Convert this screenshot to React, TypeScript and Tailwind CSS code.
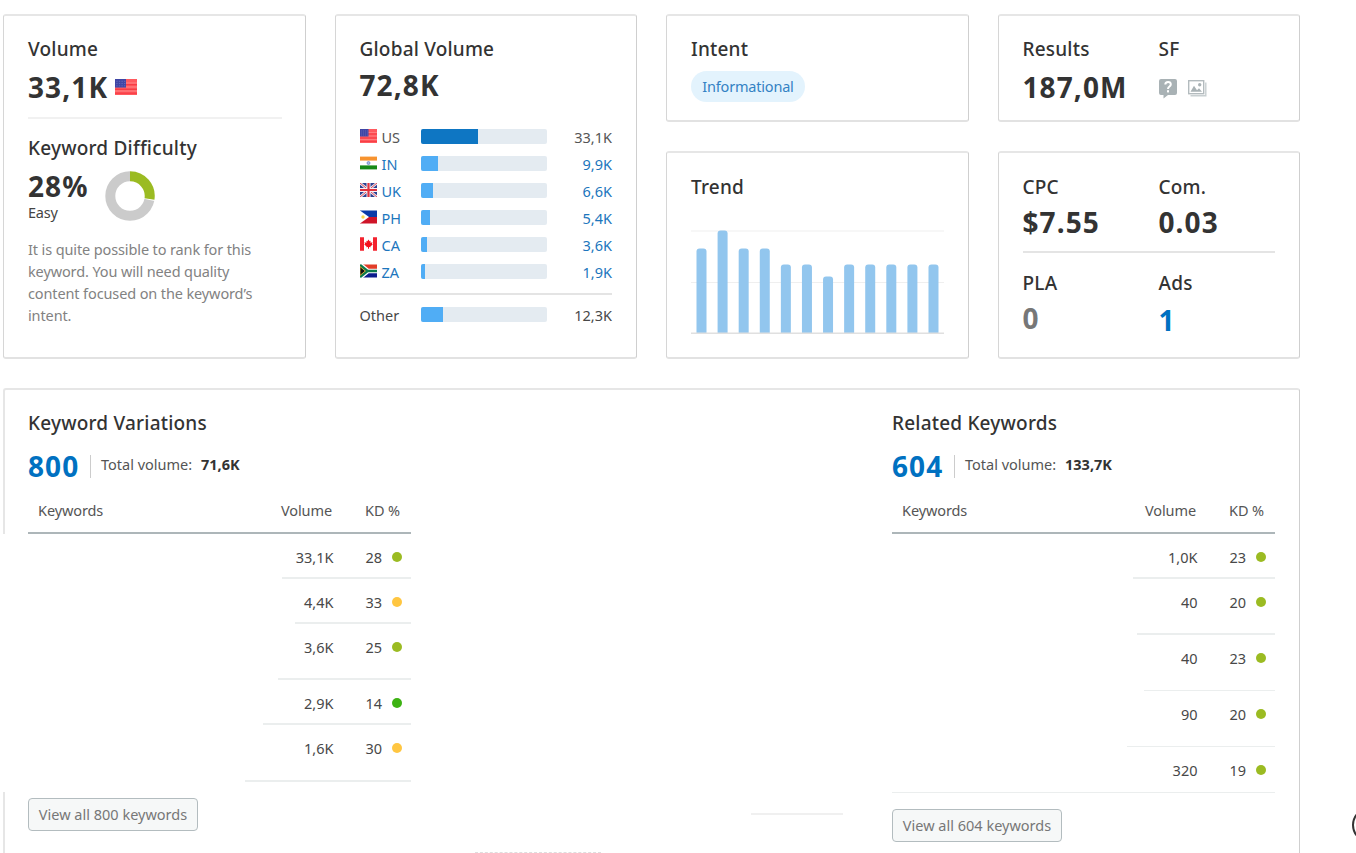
import clsx from "clsx"
import type { ReactNode } from "react"

type Country = "US" | "IN" | "UK" | "PH" | "CA" | "ZA"

const countries: { code: Country; volume: string; fill: number }[] = [
  { code: "US", volume: "33,1K", fill: 57 },
  { code: "IN", volume: "9,9K", fill: 17 },
  { code: "UK", volume: "6,6K", fill: 12 },
  { code: "PH", volume: "5,4K", fill: 9 },
  { code: "CA", volume: "3,6K", fill: 6 },
  { code: "ZA", volume: "1,9K", fill: 4 },
]

const trend = [85, 103, 85, 85, 69, 69, 57, 69, 69, 69, 69, 69]

type KeywordRow = {
  volume: string
  kd: number
  color: string
  height: string
  line: string
}

const variations: KeywordRow[] = [
  { volume: "33,1K", kd: 28, color: "bg-[#9bbb22]", height: "h-[45px]", line: "h-[2px] w-[129px]" },
  { volume: "4,4K", kd: 33, color: "bg-[#ffc641]", height: "h-[45px]", line: "h-[2px] w-[116px]" },
  { volume: "3,6K", kd: 25, color: "bg-[#9bbb22]", height: "h-[56px]", line: "h-[2px] w-[133px]" },
  { volume: "2,9K", kd: 14, color: "bg-[#3db213]", height: "h-[45px]", line: "h-[2px] w-[148px]" },
  { volume: "1,6K", kd: 30, color: "bg-[#ffc641]", height: "h-[57px]", line: "h-[2px] w-[166px]" },
]

const related: KeywordRow[] = [
  { volume: "1,0K", kd: 23, color: "bg-[#9bbb22]", height: "h-[45px]", line: "h-[2px] w-[142px]" },
  { volume: "40", kd: 20, color: "bg-[#9bbb22]", height: "h-[56px]", line: "h-[2px] w-[138px]" },
  { volume: "40", kd: 23, color: "bg-[#9bbb22]", height: "h-[56px]", line: "h-px w-[131px]" },
  { volume: "90", kd: 20, color: "bg-[#9bbb22]", height: "h-[56px]", line: "h-px w-[148px]" },
  { volume: "320", kd: 19, color: "bg-[#9bbb22]", height: "h-[46px]", line: "h-px w-[383px]" },
]

const Flag = ({ code, className }: { code: Country; className?: string }) => (
  <svg viewBox="0 0 17 14" preserveAspectRatio="none" className={clsx("shrink-0", className)}>
    {code === "US" && (
      <>
        <rect width="17" height="14" fill="#ff5a5f" />
        <path d="M0 3.5h17M0 7h17M0 10.5h17" stroke="#ff8d8d" strokeWidth="0.7" />
        <path d="M0 5h17M0 9h17M0 12.4h17" stroke="#f52f38" strokeWidth="0.7" />
        <rect width="8.5" height="7.5" fill="#3f46a5" />
        <path d="M1 2h7M1 4h7M1 6h7" stroke="#6a70bd" strokeWidth="0.7" strokeDasharray="1 1" />
      </>
    )}
    {code === "IN" && (
      <>
        <rect width="17" height="14" fill="#fff" />
        <rect width="17" height="4" y="0.6" fill="#f7932f" />
        <rect width="17" height="4" y="9.4" fill="#178a17" />
        <circle cx="8.5" cy="7" r="1.5" fill="#a9b9e0" stroke="#5f7dc4" strokeWidth="0.7" />
      </>
    )}
    {code === "UK" && (
      <>
        <rect width="17" height="14" fill="#2b3f90" />
        <path d="M0 0l17 14M17 0L0 14" stroke="#e8e6f0" strokeWidth="2.6" />
        <path d="M0 0l17 14M17 0L0 14" stroke="#e0505c" strokeWidth="1" />
        <path d="M8.5 0v14M0 7h17" stroke="#f4f0f6" strokeWidth="4" />
        <path d="M8.5 0v14M0 7h17" stroke="#e0323e" strokeWidth="2.2" />
      </>
    )}
    {code === "PH" && (
      <>
        <rect width="17" height="7" y="0.5" fill="#0a3aa8" />
        <rect width="17" height="6.5" y="7" fill="#cf1428" />
        <path d="M0 0.5L9 7l-9 6.5z" fill="#fff" />
        <circle cx="3" cy="7" r="1.7" fill="#fbd84a" />
      </>
    )}
    {code === "CA" && (
      <>
        <rect width="17" height="14" fill="#fff" />
        <path d="M0 0.3h4v13.4H0zM13 0.3h4v13.4h-4z" fill="#f3232f" />
        <path
          d="M8.5 2.6l1.1 1.6 1-.4-.2 1.900 2.100-.500-.5 1.600.7.700-2.300 2 .2.700-1.600-.1v1.600h-1v-1.600l-1.600.1.2-.700-2.300-2 .7-.700-.5-1.600 2.100.5-.2-1.900 1 .4z"
          fill="#f3121e"
        />
      </>
    )}
    {code === "ZA" && (
      <>
        <rect width="17" height="5.5" y="0.5" fill="#e23d28" />
        <rect width="17" height="5.5" y="8" fill="#0c1c8c" />
        <path d="M0 0.5l8 6.5-8 6.5zM6 7h11" fill="#fff" stroke="#fff" strokeWidth="4.4" />
        <path d="M0 1l7.5 6L0 13M7 7h10" fill="none" stroke="#0c7a4b" strokeWidth="2.6" />
        <path d="M0 2.6L5.4 7 0 11.4z" fill="#111" stroke="#f5b72e" strokeWidth="0.8" />
      </>
    )}
  </svg>
)

const Card = ({ children, className }: { children: ReactNode; className: string }) => (
  <div
    className={clsx(
      "rounded-[3px] border-t-2 border-r border-b-2 border-l border-t-[#e6e6e6] border-r-[#cfcfcf] border-b-[#e2e2e2] border-l-[#d6d6d6] px-6",
      className
    )}
  >
    {children}
  </div>
)

const Title = ({ children }: { children: ReactNode }) => (
  <h3 className="text-[19px] leading-6 font-medium tracking-[0.2px] whitespace-nowrap text-[#333]">{children}</h3>
)

const Value = ({ children, className }: { children: ReactNode; className?: string }) => (
  <div
    className={clsx("text-[28px] leading-8 font-bold tracking-[1.1px] whitespace-nowrap", className ?? "text-[#333]")}
  >
    {children}
  </div>
)

const Bar = ({ fill, active }: { fill: number; active?: boolean }) => (
  <div className="h-[15px] w-[126px] overflow-hidden rounded-[2px] bg-[#e4ebf1]">
    <div className={clsx("h-full", active ? "bg-[#0e76c3]" : "bg-[#50adf5]")} style={{ width: fill }} />
  </div>
)

const VolumeCard = () => (
  <Card className="row-span-2 pt-[21px]">
    <Title>Volume</Title>
    <div className="mt-[10px] flex items-center gap-[7px]">
      <Value>33,1K</Value>
      <Flag code="US" className="-mt-px h-4 w-[22px]" />
    </div>
    <div className="mt-[14px] mb-[17px] h-[2px] w-[254px] bg-[#f1f1f1]" />
    <Title>Keyword Difficulty</Title>
    <div className="mt-[10px] flex">
      <div className="w-[77px]">
        <Value>28%</Value>
        <div className="h-5 leading-5 tracking-[-0.2px] text-[#444]">Easy</div>
      </div>
      <svg viewBox="0 0 50 50" className="mt-px size-[50px]">
        <circle cx="25" cy="25" r="19.7" fill="none" stroke="#cbcbcb" strokeWidth="10" />
        <path d="M25 5.3A19.7 19.7 0 0 1 44.3 28.9" fill="none" stroke="#fff" strokeWidth="11" />
        <path d="M25 5.3A19.7 19.7 0 0 1 44.5 27.9" fill="none" stroke="#9bbb22" strokeWidth="10" />
      </svg>
    </div>
    <p className="mt-4 leading-[22px] tracking-[-0.12px] whitespace-nowrap text-[#828282]">
      It is quite possible to rank for this
      <br />
      keyword. You will need quality
      <br />
      content focused on the keyword’s
      <br />
      intent.
    </p>
  </Card>
)

const GlobalVolumeCard = () => (
  <Card className="row-span-2 pt-[21px]">
    <Title>Global Volume</Title>
    <div className="mt-2 mb-[22px]">
      <Value>72,8K</Value>
    </div>
    {countries.map(({ code, volume, fill }) => (
      <div
        key={code}
        className={clsx("flex h-[27px] items-center", code === "US" ? "text-[#555]" : "text-[#1c76bd]")}
      >
        <Flag code={code} className="-mt-px h-[14px] w-[17px]" />
        <span className="ml-[5px] w-[39px] pt-[3px]">{code}</span>
        <Bar fill={fill} active={code === "US"} />
        <span className="ml-auto pt-[3px]">{volume}</span>
      </div>
    ))}
    <div className="mt-2 mb-[6px] h-[2px] bg-[#e4e4e4]" />
    <div className="flex h-[27px] items-center text-[#484848]">
      <span className="w-[61px] pt-[3px]">Other</span>
      <Bar fill={22} />
      <span className="ml-auto pt-[3px]">12,3K</span>
    </div>
  </Card>
)

const IntentCard = () => (
  <Card className="pt-[21px]">
    <Title>Intent</Title>
    <span className="mt-[10px] flex h-[31px] w-[114px] items-center justify-center rounded-full bg-[#e3f3fd] tracking-[-0.2px] text-[#3382c4]">
      Informational
    </span>
  </Card>
)

const ResultsCard = () => (
  <Card className="flex pt-[21px]">
    <div className="w-[136px]">
      <Title>Results</Title>
      <Value className="mt-[10px] text-[#333]">187,0M</Value>
    </div>
    <div>
      <Title>SF</Title>
      <div className="mt-[18px] flex gap-[11px]">
        <svg viewBox="0 0 18 20" className="h-5 w-[18px]">
          <path
            d="M2 0h14a2 2 0 0 1 2 2v12a2 2 0 0 1-2 2H9l-4.500 3.600V16H2a2 2 0 0 1-2-2V2a2 2 0 0 1 2-2z"
            fill="#a9b2b5"
          />
          <path d="M6.3 5.6C6.3 2 11.8 2.200 11.800 5.400c0 2.200-2.800 2-2.800 4.600" fill="none" stroke="#fff" strokeWidth="2" />
          <rect x="8" y="11.2" width="2" height="2.200" fill="#fff" />
        </svg>
        <svg viewBox="0 0 19 17" className="mt-px h-[17px] w-[19px]" fill="none">
          <path d="M17.800 2.500v13.300H2.500" stroke="#c8cfd1" strokeWidth="1.400" />
          <rect x="0.7" y="0.7" width="15" height="13" stroke="#b3bbbe" strokeWidth="1.400" />
          <path d="M2.500 11.700l3.500-6 3 4.500 2-2 3 3.500z" fill="#a9b2b5" />
          <circle cx="11.7" cy="4.7" r="1.7" fill="#a9b2b5" />
        </svg>
      </div>
    </div>
  </Card>
)

const TrendCard = () => (
  <Card className="pt-[22px]">
    <Title>Trend</Title>
    <svg viewBox="0 0 253 105" className="mt-[30px] h-[105px] w-[253px]">
      <rect width="253" height="2" y="1" fill="#f7f7f7" />
      <rect width="253" height="1" y="53" fill="#efefef" />
      {trend.map((height, i) => (
        <path
          key={i}
          d={`M${5.5 + i * 21.09} 104.500v${3 - height}q0-3 3-3h4q3 0 3 3v${height - 3}z`}
          fill="#92c6ee"
        />
      ))}
      <rect width="253" height="1.500" y="103.500" fill="#e0e0e0" />
    </svg>
  </Card>
)

const CostCard = () => (
  <Card className="pt-[22px]">
    <div className="flex">
      <div className="w-[136px]">
        <Title>CPC</Title>
        <Value className="mt-[7px] text-[#333]">$7.55</Value>
      </div>
      <div>
        <Title>Com.</Title>
        <Value className="mt-[7px] text-[#333]">0.03</Value>
      </div>
    </div>
    <div className="mt-[13px] mb-[18px] h-[2px] bg-[#e4e4e4]" />
    <div className="flex">
      <div className="w-[136px]">
        <Title>PLA</Title>
        <Value className="mt-[7px] text-[#777]">0</Value>
      </div>
      <div>
        <Title>Ads</Title>
        <Value className="mt-[9px] text-[#0071c1]">1</Value>
      </div>
    </div>
  </Card>
)

type KeywordTableProps = {
  title: string
  count: number
  total: string
  rows: KeywordRow[]
}

const KeywordTable = ({ title, count, total, rows }: KeywordTableProps) => (
  <section className="w-[383px]">
    <Title>{title}</Title>
    <div className="mt-[15px] flex h-8 items-center">
      <Value className="w-[62px] text-[#0071c1]">{count}</Value>
      <div className="h-[23px] w-px bg-[#ccc]" />
      <span className="ml-[10px] w-[100px] pb-[2px] whitespace-nowrap text-[#555]">Total volume:</span>
      <span className="pb-[2px] font-bold text-[#333]">{total}</span>
    </div>
    <div className="mt-4 flex h-9 border-b-2 border-[#adb6b9] leading-6 tracking-[-0.1px] text-[#555]">
      <span className="w-[243px] pl-[10px]">Keywords</span>
      <span className="w-[61px] text-right">Volume</span>
      <span className="ml-[33px]">KD %</span>
    </div>
    {rows.map((row, i) => (
      <div key={i} className={clsx("flex flex-col items-end justify-between", row.height)}>
        <div className="flex w-full justify-end pt-[11px] pr-[9.500px] leading-6 text-[#484848]">
          <span>{row.volume}</span>
          <span className="ml-8 w-[26px]">{row.kd}</span>
          <span className={clsx("mt-[6.500px] size-[10px] rounded-full", row.color)} />
        </div>
        <div className={clsx("shrink-0 bg-[#ebeeee]", row.line)} />
      </div>
    ))}
    <button className="mt-[16px] h-[33px] w-[170px] rounded-[4px] border border-[#b3bcbf] bg-[#f6f8f8] whitespace-nowrap text-[#777]">
      View all {count} keywords
    </button>
  </section>
)

const App = () => (
  <div className="relative h-[853px] w-full overflow-hidden bg-white pt-[14px] pl-[3px] font-['Noto_Sans',sans-serif] text-[14.5px]">
    <div className="grid w-[1297px] grid-cols-4 grid-rows-[108px_208px] gap-[29px]">
      <VolumeCard />
      <GlobalVolumeCard />
      <IntentCard />
      <ResultsCard />
      <TrendCard />
      <CostCard />
    </div>

    <div className="relative mt-[29px] flex h-[480px] w-[1297px] rounded-t-[3px] border-t-2 border-r border-l-2 border-t-[#e6e6e6] border-r-[#cfcfcf] border-l-[#e6e6e6] pt-[21px] pr-6 pl-[23px]">
      <div className="absolute top-[144px] -left-[2px] h-[258px] w-[2px] bg-white" />
      <KeywordTable title="Keyword Variations" count={800} total="71,6K" rows={variations} />
      <div className="mt-[402px] ml-[340px] h-[2px] w-[92px] bg-[#f0f0f0]" />
      <div className="ml-auto">
        <KeywordTable title="Related Keywords" count={604} total="133,7K" rows={related} />
      </div>
    </div>

    {/* Top edge of the next row, cut off by the fold */}
    <div className="absolute top-[852px] left-[475px] w-[126px] border-t border-dashed border-[#dedede]" />

    {/* Floating action button, mostly past the right edge */}
    <div className="absolute top-[807px] left-[1352px] size-9 rounded-full border-2 border-[#333]" />
  </div>
)

export default App
